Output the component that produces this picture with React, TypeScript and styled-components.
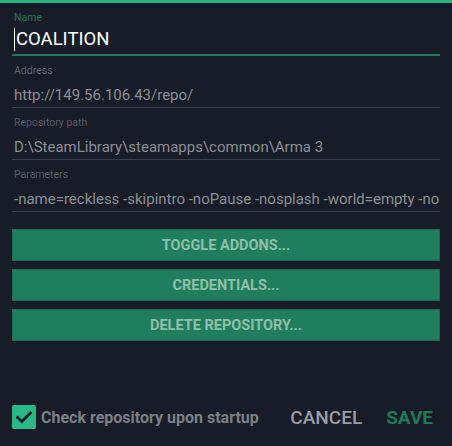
import React from 'react';
import styled, { createGlobalStyle } from 'styled-components';

const GlobalStyle = createGlobalStyle`
  html, body {
    margin: 0;
    padding: 0;
    background: #181c28;
    font-family: Roboto, 'Liberation Sans', sans-serif;
  }
`;

const Page = styled.div`
  display: flex;
  flex-direction: column;
  height: 100vh;
  box-sizing: border-box;
  border-top: 3px solid #2ab47f;
  background: #181c28;
`;

const Form = styled.div`
  display: flex;
  flex-direction: column;
  padding: 0 12px;
`;

const Field = styled.div`
  display: flex;
  flex-direction: column;
  margin-top: 8px;
`;

const Label = styled.div<{ $active?: boolean }>`
  font-size: 10.5px;
  line-height: 14px;
  padding-left: 2px;
  color: ${(p) => (p.$active ? '#1e7a57' : '#565b66')};
`;

const Value = styled.div<{ $active?: boolean }>`
  display: flex;
  align-items: center;
  white-space: nowrap;
  overflow: hidden;
  padding-left: 2px;
  font-size: ${(p) => (p.$active ? '18.5px' : '15px')};
  line-height: ${(p) => (p.$active ? '25px' : '19px')};
  padding-top: ${(p) => (p.$active ? '2px' : '8px')};
  padding-bottom: 2px;
  color: ${(p) => (p.$active ? '#ffffff' : '#8b8e95')};
  border-bottom: ${(p) => (p.$active ? '2px solid #1f7b5a' : '1px solid #3b3f4a')};
`;

const Caret = styled.span`
  display: inline-block;
  width: 1px;
  height: 23px;
  margin-right: 1px;
  background: #ffffff;
`;

const Actions = styled.div`
  display: flex;
  flex-direction: column;
  gap: 8px;
  margin-top: 17px;
`;

const ActionButton = styled.button`
  height: 32px;
  border: 1px solid #1c6a50;
  background: #1f7e5e;
  color: #8fbfa9;
  font-family: Roboto, 'Liberation Sans', sans-serif;
  font-weight: 700;
  font-size: 14.5px;
  padding: 0;
  cursor: pointer;
`;

const Footer = styled.div`
  display: flex;
  align-items: center;
  height: 40px;
  margin-top: auto;
  margin-bottom: 9px;
  padding: 0 12px;
`;

const CheckRow = styled.label`
  display: flex;
  align-items: center;
  gap: 5px;
  flex: 1;
  cursor: pointer;
`;

const CheckBox = styled.span`
  width: 24px;
  height: 24px;
  border-radius: 2px;
  background: #2ab886;
  display: flex;
  align-items: center;
  justify-content: center;
`;

const CheckText = styled.span`
  font-size: 16px;
  font-weight: 700;
  color: #7c7f86;
`;

const FooterButton = styled.button<{ $primary?: boolean }>`
  background: none;
  border: none;
  padding: 0;
  margin-left: ${(p) => (p.$primary ? '24px' : '0')};
  margin-right: ${(p) => (p.$primary ? '7px' : '0')};
  font-family: Roboto, 'Liberation Sans', sans-serif;
  font-size: 19px;
  font-weight: ${(p) => (p.$primary ? 700 : 500)};
  color: ${(p) => (p.$primary ? '#1e7a56' : '#9a9da4')};
  cursor: pointer;
`;

const fields = [
  { label: 'Address', value: 'http://149.56.106.43/repo/' },
  { label: 'Repository path', value: 'D:\\SteamLibrary\\steamapps\\common\\Arma 3' },
  {
    label: 'Parameters',
    value: '-name=reckless -skipintro -noPause -nosplash -world=empty -noLogs',
  },
];

const App = () => {
  return (
    <Page>
      <GlobalStyle />
      <Form>
        <Field>
          <Label $active>Name</Label>
          <Value $active>
            <Caret />
            COALITION
          </Value>
        </Field>
        {fields.map((f) => (
          <Field key={f.label}>
            <Label>{f.label}</Label>
            <Value>{f.value}</Value>
          </Field>
        ))}
        <Actions>
          <ActionButton>TOGGLE ADDONS...</ActionButton>
          <ActionButton>CREDENTIALS...</ActionButton>
          <ActionButton>DELETE REPOSITORY...</ActionButton>
        </Actions>
      </Form>
      <Footer>
        <CheckRow>
          <CheckBox>
            <svg width="18" height="18" viewBox="0 0 24 24">
              <path
                d="M3.5 12.5 L9 18 L20.5 6.5"
                fill="none"
                stroke="#181c28"
                strokeWidth="3.6"
                strokeLinecap="square"
              />
            </svg>
          </CheckBox>
          <CheckText>Check repository upon startup</CheckText>
        </CheckRow>
        <FooterButton>CANCEL</FooterButton>
        <FooterButton $primary>SAVE</FooterButton>
      </Footer>
    </Page>
  );
};

export default App;
